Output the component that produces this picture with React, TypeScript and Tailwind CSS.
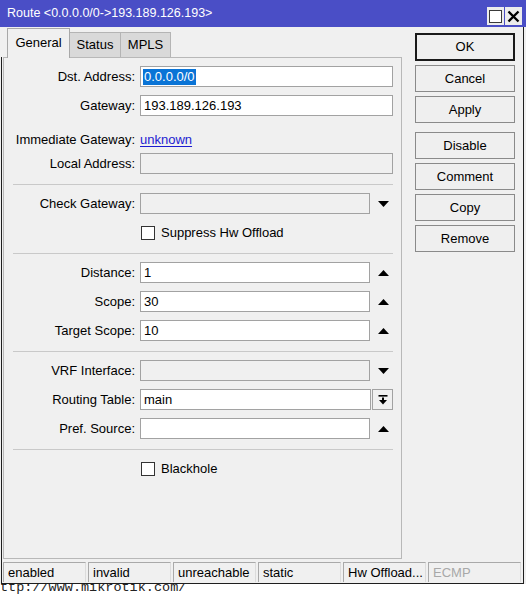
import React from "react";

const dark = "border-[#1e1e1e]";

function UpArrow() {
  return (
    <svg width="11" height="6" viewBox="0 0 11 6">
      <polygon points="0,6 11,6 5.5,0" fill="#000" />
    </svg>
  );
}

function DownArrow() {
  return (
    <svg width="11" height="6" viewBox="0 0 11 6">
      <polygon points="0,0 11,0 5.5,6" fill="#000" />
    </svg>
  );
}

function DropIcon() {
  return (
    <svg width="10" height="10" viewBox="0 0 10 10">
      <rect x="0.5" y="0" width="9" height="1.6" fill="#000" />
      <rect x="4" y="2.5" width="2" height="3" fill="#000" />
      <polygon points="1,5 9,5 5,9.5" fill="#000" />
    </svg>
  );
}

function Label({ children }: { children: React.ReactNode }) {
  return <div className="w-[136px] shrink-0 pr-[5px] text-right whitespace-nowrap">{children}</div>;
}

function TextBox({
  value,
  width,
  disabled,
  selected,
}: {
  value?: string;
  width: string;
  disabled?: boolean;
  selected?: boolean;
}) {
  return (
    <div
      className={`${width} h-[21px] border border-[#a2a2a2] flex items-center pl-[3px] ${
        disabled ? "bg-[#f0f0f0]" : "bg-white"
      }`}
    >
      {selected ? (
        <span className="bg-[#0a74d6] text-white leading-[16px] -ml-[1px] pl-[1px] pr-[1px]">{value}</span>
      ) : (
        <span className="leading-[16px]">{value}</span>
      )}
    </div>
  );
}

function Row({ className = "", children }: { className?: string; children: React.ReactNode }) {
  return <div className={`flex items-center h-[21px] ${className}`}>{children}</div>;
}

function Separator({ className = "" }: { className?: string }) {
  return <div className={`ml-[9px] mr-[8px] h-px bg-[#c9c9c9] ${className}`} />;
}

function Check({ label, className = "" }: { label: string; className?: string }) {
  return (
    <div className={`flex items-center h-[14px] ${className}`}>
      <div className="ml-[137px] w-[14px] h-[14px] border border-[#333] bg-white" />
      <span className="ml-[6px] leading-[14px]">{label}</span>
    </div>
  );
}

function ArrowSlot({ children }: { children: React.ReactNode }) {
  return <div className="ml-[8px] w-[11px] flex items-center justify-center">{children}</div>;
}

function Btn({ children, primary }: { children: React.ReactNode; primary?: boolean }) {
  return (
    <div
      className={`w-[100px] flex items-center justify-center bg-[#efefef] ${
        primary
          ? "h-[28px] border-2 border-[#1a1a1a]"
          : "h-[27px] border border-[#8a8a8a]"
      }`}
    >
      {children}
    </div>
  );
}

function Cell({ children, className = "", grow }: { children: React.ReactNode; className?: string; grow?: boolean }) {
  return (
    <div
      className={`${grow ? "flex-1" : "w-[83px]"} h-[20px] border-t border-l border-[#a9a9a9] border-r border-r-[#dcdcdc] flex items-center pl-[4px] whitespace-nowrap ${className}`}
    >
      {children}
    </div>
  );
}

export default function App() {
  return (
    <div className="w-[526px] h-[594px] bg-white overflow-hidden font-['Liberation_Sans',Arial,sans-serif] text-[13px] text-black">
      <div className="relative z-10 w-[526px] h-[584px] bg-[#f0f0f0] flex flex-col">
        {/* title bar */}
        <div className="h-[27px] shrink-0 bg-[#4a4ec6] flex pl-[7px] pr-[4px]">
          <div className="flex-1 self-center text-white text-[12.5px] leading-[16px] pb-[1px]">
            Route &lt;0.0.0.0/0-&gt;193.189.126.193&gt;
          </div>
          <div className="self-end mb-[2px] flex gap-px">
            <div className="w-[17px] h-[18px] bg-[#ececec] flex items-center justify-center">
              <div className="w-[13px] h-[13px] border-[1.5px] border-[#3a3a3a] bg-white" />
            </div>
            <div className="w-[17px] h-[18px] bg-[#ececec] flex items-center justify-center">
              <svg width="13" height="13" viewBox="0 0 13 13">
                <path d="M1.5 1.5 L11.5 11.5 M11.5 1.5 L1.5 11.5" stroke="#000" strokeWidth="2.3" />
              </svg>
            </div>
          </div>
        </div>

        {/* client area */}
        <div className={`flex-1 flex flex-col ml-px mr-[2px] border-r border-b ${dark}`}>
          <div className="flex-1 flex">
            {/* left: tabs + page */}
            <div className="w-[401px] flex flex-col">
              <div className="h-[30px] shrink-0 flex items-end pl-[6px]">
                <div className="relative z-10 -mb-px w-[63px] h-[30px] bg-[#f0f0f0] border-t border-l border-r border-[#a8a8a8] flex items-center justify-center pb-[2px]">
                  General
                </div>
                <div className="w-[51px] h-[25px] bg-[#d9d9d9] border-t border-r border-[#b4b4b4] flex items-center justify-center">
                  Status
                </div>
                <div className="w-[50px] h-[25px] bg-[#d9d9d9] border-t border-r border-[#b4b4b4] flex items-center justify-center">
                  MPLS
                </div>
              </div>
              <div className={`flex-1 flex border-l ${dark} pl-px pb-px`}>
                <div className="flex-1 border border-[#b8b8b8] pt-[8px] flex flex-col">
                  <Row>
                    <Label>Dst. Address:</Label>
                    <TextBox width="w-[253px]" value="0.0.0.0/0" selected />
                  </Row>
                  <Row className="mt-[8px]">
                    <Label>Gateway:</Label>
                    <TextBox width="w-[253px]" value="193.189.126.193" />
                  </Row>
                  <div className="mt-[16px] h-[16px] flex items-center">
                    <Label>Immediate Gateway:</Label>
                    <span className="text-[#1c1cd0] underline underline-offset-[2px] leading-[16px]">unknown</span>
                  </div>
                  <Row className="mt-[5px]">
                    <Label>Local Address:</Label>
                    <TextBox width="w-[253px]" disabled />
                  </Row>
                  <Separator className="mt-[10px]" />
                  <Row className="mt-[8px]">
                    <Label>Check Gateway:</Label>
                    <TextBox width="w-[230px]" disabled />
                    <ArrowSlot>
                      <DownArrow />
                    </ArrowSlot>
                  </Row>
                  <Check className="mt-[12px]" label="Suppress Hw Offload" />
                  <Separator className="mt-[13px]" />
                  <Row className="mt-[8px]">
                    <Label>Distance:</Label>
                    <TextBox width="w-[230px]" value="1" />
                    <ArrowSlot>
                      <UpArrow />
                    </ArrowSlot>
                  </Row>
                  <Row className="mt-[8px]">
                    <Label>Scope:</Label>
                    <TextBox width="w-[230px]" value="30" />
                    <ArrowSlot>
                      <UpArrow />
                    </ArrowSlot>
                  </Row>
                  <Row className="mt-[8px]">
                    <Label>Target Scope:</Label>
                    <TextBox width="w-[230px]" value="10" />
                    <ArrowSlot>
                      <UpArrow />
                    </ArrowSlot>
                  </Row>
                  <Separator className="mt-[10px]" />
                  <Row className="mt-[8px]">
                    <Label>VRF Interface:</Label>
                    <TextBox width="w-[230px]" disabled />
                    <ArrowSlot>
                      <DownArrow />
                    </ArrowSlot>
                  </Row>
                  <Row className="mt-[8px]">
                    <Label>Routing Table:</Label>
                    <TextBox width="w-[231px]" value="main" />
                    <div className="ml-px w-[21px] h-[21px] border border-[#a2a2a2] bg-[#f0f0f0] flex items-center justify-center">
                      <DropIcon />
                    </div>
                  </Row>
                  <Row className="mt-[8px]">
                    <Label>Pref. Source:</Label>
                    <TextBox width="w-[230px]" />
                    <ArrowSlot>
                      <UpArrow />
                    </ArrowSlot>
                  </Row>
                  <Separator className="mt-[10px]" />
                  <Check className="mt-[12px]" label="Blackhole" />
                </div>
              </div>
            </div>

            {/* right: action buttons */}
            <div className="flex-1 pl-[13px] pt-[6px] flex flex-col">
              <Btn primary>OK</Btn>
              <div className="mt-[4px] flex flex-col gap-[4px]">
                <Btn>Cancel</Btn>
                <Btn>Apply</Btn>
              </div>
              <div className="mt-[9px] flex flex-col gap-[4px]">
                <Btn>Disable</Btn>
                <Btn>Comment</Btn>
                <Btn>Copy</Btn>
                <Btn>Remove</Btn>
              </div>
            </div>
          </div>

          {/* status bar */}
          <div className={`h-[23px] shrink-0 border-l ${dark} pl-px pt-[2px] pb-px pr-[2px] flex gap-[2px]`}>
            <Cell>enabled</Cell>
            <Cell>invalid</Cell>
            <Cell>unreachable</Cell>
            <Cell>static</Cell>
            <Cell>Hw Offload...</Cell>
            <Cell grow className="text-[#a8a8a8]">
              ECMP
            </Cell>
          </div>
        </div>
      </div>
      {/* desktop text partly hidden behind the window */}
      <div className="-mt-[3px] h-[13px] overflow-hidden font-['Liberation_Mono',monospace] text-[13.5px] leading-[14px] text-[#222]">
        ttp://www.mikrotik.com/
      </div>
    </div>
  );
}
